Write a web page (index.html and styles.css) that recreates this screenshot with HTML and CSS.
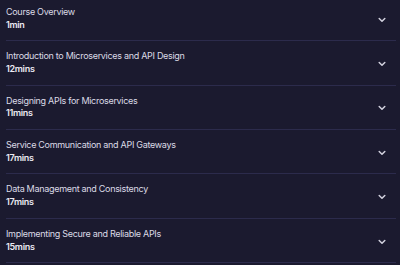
FILE: index.html
```html
<!DOCTYPE html>
<html>
<head>
<meta charset="utf-8">
<link rel="stylesheet" href="styles.css">
</head>
<body>
<div class="list">
  <div class="row">
    <div class="info"><div class="title">Course Overview</div><div class="dur">1min</div></div>
    <svg class="chev" viewBox="0 0 8 6" width="8" height="6"><path d="M1.2 1.5 L4 4.3 L6.8 1.5" fill="none" stroke="currentColor" stroke-width="1.5" stroke-linecap="round" stroke-linejoin="round"/></svg>
  </div>
  <div class="row">
    <div class="info"><div class="title">Introduction to Microservices and API Design</div><div class="dur">12mins</div></div>
    <svg class="chev" viewBox="0 0 8 6" width="8" height="6"><path d="M1.2 1.5 L4 4.3 L6.8 1.5" fill="none" stroke="currentColor" stroke-width="1.5" stroke-linecap="round" stroke-linejoin="round"/></svg>
  </div>
  <div class="row">
    <div class="info"><div class="title">Designing APIs for Microservices</div><div class="dur">11mins</div></div>
    <svg class="chev" viewBox="0 0 8 6" width="8" height="6"><path d="M1.2 1.5 L4 4.3 L6.8 1.5" fill="none" stroke="currentColor" stroke-width="1.5" stroke-linecap="round" stroke-linejoin="round"/></svg>
  </div>
  <div class="row">
    <div class="info"><div class="title">Service Communication and API Gateways</div><div class="dur">17mins</div></div>
    <svg class="chev" viewBox="0 0 8 6" width="8" height="6"><path d="M1.2 1.5 L4 4.3 L6.8 1.5" fill="none" stroke="currentColor" stroke-width="1.5" stroke-linecap="round" stroke-linejoin="round"/></svg>
  </div>
  <div class="row">
    <div class="info"><div class="title">Data Management and Consistency</div><div class="dur">17mins</div></div>
    <svg class="chev" viewBox="0 0 8 6" width="8" height="6"><path d="M1.2 1.5 L4 4.3 L6.8 1.5" fill="none" stroke="currentColor" stroke-width="1.5" stroke-linecap="round" stroke-linejoin="round"/></svg>
  </div>
  <div class="row">
    <div class="info"><div class="title">Implementing Secure and Reliable APIs</div><div class="dur">15mins</div></div>
    <svg class="chev" viewBox="0 0 8 6" width="8" height="6"><path d="M1.2 1.5 L4 4.3 L6.8 1.5" fill="none" stroke="currentColor" stroke-width="1.5" stroke-linecap="round" stroke-linejoin="round"/></svg>
  </div>
</div>
</body>
</html>
```

FILE: styles.css
```css
html, body {
  margin: 0;
  padding: 0;
  background: #1b1a2f;
  height: 100%;
  overflow: hidden;
}
body {
  font-family: Inter, "Open Sans", sans-serif;
  color: #e4e3ee;
}
.list {
  margin: 0 4px 0 6px;
}
.row {
  display: flex;
  align-items: center;
  justify-content: space-between;
  padding: 9px 0 9px 0;
  border-bottom: 1px solid #2c2b4c;
}
.row:first-child {
  padding-top: 5.8px;
}
.info {
  display: flex;
  flex-direction: column;
}
.title {
  font-size: 9px;
  line-height: 12.7px;
  letter-spacing: -0.3px;
  color: #dcdbe6;
}
.dur {
  font-size: 9px;
  line-height: 12.7px;
  letter-spacing: -0.3px;
  font-weight: 600;
  color: #eceaf3;
}
.chev {
  color: #d2d1de;
  margin-right: 10px;
  margin-top: 2px;
}
```
